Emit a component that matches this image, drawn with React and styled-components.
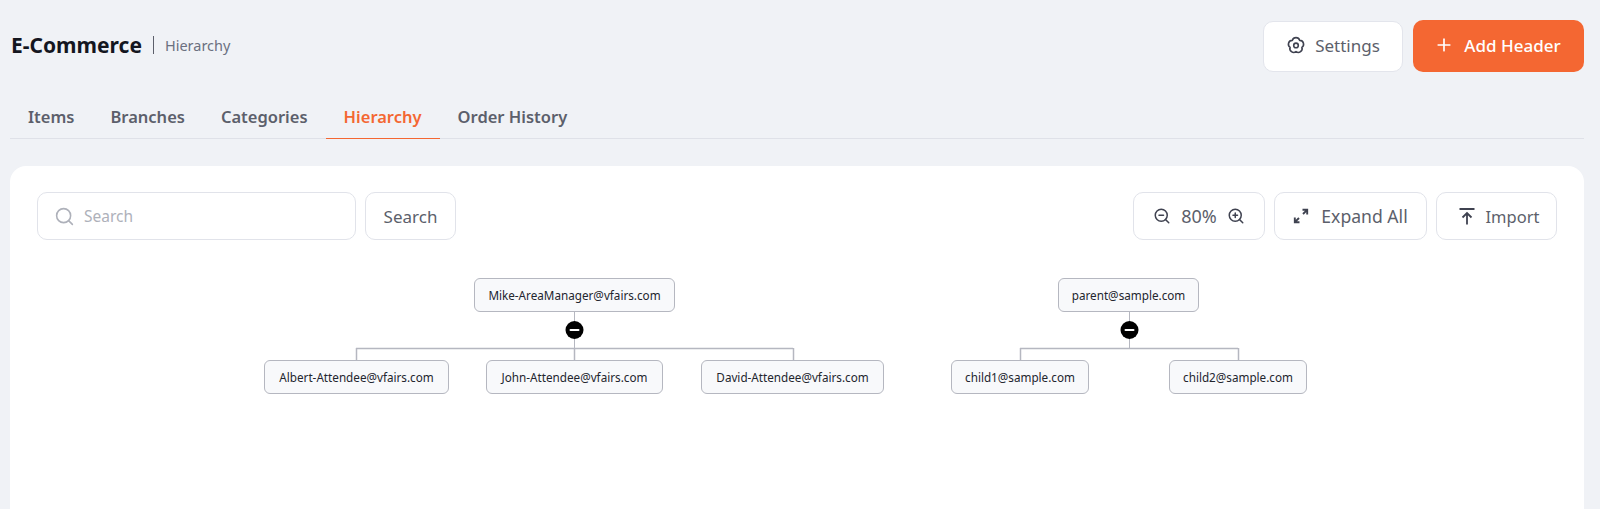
import React from 'react'
import styled, { createGlobalStyle } from 'styled-components'
import { Search, ZoomIn, ZoomOut, Plus } from 'lucide-react'

const GlobalStyle = createGlobalStyle`
    html, body {
        margin: 0;
        height: 509px;
        overflow: hidden;
        background: #f0f2f6;
        font-family: "Noto Sans", "Open Sans", sans-serif;
    }
    * { box-sizing: border-box; }
`

const Page = styled.div`
    height: 509px;
    padding: 20px 16px 0 10px;
    display: flex;
    flex-direction: column;
`

const Header = styled.header`
    height: 52px;
    display: flex;
    align-items: center;
    justify-content: space-between;
`

const TitleGroup = styled.div`
    display: flex;
    align-items: center;
    padding: 0 0 2px 1px;
`

const Title = styled.h1`
    margin: 0;
    font-size: 21px;
    line-height: 24px;
    font-weight: 700;
    color: #14161f;
`

const SubTitle = styled.span`
    margin-left: 11px;
    padding-left: 11px;
    border-left: 1px solid #5c5f6b;
    font-size: 14.5px;
    line-height: 18px;
    color: #6b7080;
`

const HeaderActions = styled.div`
    display: flex;
    align-items: center;
    gap: 10px;
`

const SettingsButton = styled.button`
    width: 140px;
    height: 51px;
    display: flex;
    align-items: center;
    justify-content: center;
    gap: 9px;
    padding: 0 0 2px;
    background: #fff;
    border: 1px solid #e3e5ec;
    border-radius: 10px;
    font: inherit;
    font-size: 17px;
    color: #5c5f6b;
`

const PrimaryButton = styled.button`
    width: 171px;
    height: 52px;
    display: flex;
    align-items: center;
    justify-content: center;
    gap: 10px;
    padding: 0 2px 2px 0;
    background: #f46732;
    border: 0;
    border-radius: 10px;
    font: inherit;
    font-size: 17px;
    font-weight: 500;
    color: #fff;
`

const Tabs = styled.nav`
    margin-top: 27px;
    height: 40px;
    display: flex;
    border-bottom: 1px solid #dfe1e8;
`

const Tab = styled.a`
    height: 40px;
    padding: 0 18px 5px;
    display: flex;
    align-items: center;
    font-size: 16.5px;
    font-weight: 600;
    color: ${p => (p.$active ? '#f46732' : '#5c5f6b')};
    border-bottom: 1px solid ${p => (p.$active ? '#f46732' : 'transparent')};
`

const Card = styled.main`
    margin-top: 27px;
    flex: 1;
    background: #fff;
    border-radius: 16px 16px 0 0;
    padding: 26px 27px 0;
    position: relative;
`

const Toolbar = styled.div`
    display: flex;
    justify-content: space-between;
`

const ToolGroup = styled.div`
    display: flex;
    gap: 9px;
`

const SearchBox = styled.label`
    width: 319px;
    height: 48px;
    display: flex;
    align-items: center;
    gap: 7px;
    padding: 0 16px;
    border: 1px solid #e1e3ea;
    border-radius: 10px;
`

const SearchInput = styled.input`
    flex: 1;
    min-width: 0;
    border: 0;
    outline: none;
    font: inherit;
    font-size: 15.5px;
    color: #5c5f6b;
    &::placeholder { color: #aeb1ba; }
`

const ToolButton = styled.button`
    width: ${p => p.$width}px;
    height: 48px;
    display: flex;
    align-items: center;
    justify-content: center;
    gap: ${p => p.$gap || 12}px;
    background: #fff;
    border: 1px solid #e1e3ea;
    border-radius: 10px;
    font: inherit;
    font-size: ${p => p.$size || 17}px;
    color: #5c5f6b;
    padding: 0 0 0 ${p => p.$shift || 0}px;
`

const Canvas = styled.div`
    position: absolute;
    inset: 0;
    pointer-events: none;
`

const Links = styled.svg`
    position: absolute;
    left: 0;
    top: 0;
`

const Node = styled.div`
    position: absolute;
    left: ${p => p.$x}px;
    top: ${p => p.$y}px;
    width: ${p => p.$w}px;
    height: 34px;
    display: flex;
    align-items: center;
    justify-content: center;
    background: #f8f9fb;
    border: 1px solid #b5b7c0;
    border-radius: 6px;
    font-size: 11.7px;
    color: #23252e;
    white-space: nowrap;
`

// page offsets of the card, the diagram coordinates below are page coordinates
const OX = 10
const OY = 166

const trees = [
    {
        cx: 574,
        root: { label: 'Mike-AreaManager@vfairs.com', x: 474, w: 201 },
        children: [
            { label: 'Albert-Attendee@vfairs.com', x: 264, w: 185, stub: 356 },
            { label: 'John-Attendee@vfairs.com', x: 486, w: 177, stub: 574 },
            { label: 'David-Attendee@vfairs.com', x: 701, w: 183, stub: 793 },
        ],
    },
    {
        cx: 1129,
        root: { label: 'parent@sample.com', x: 1058, w: 141 },
        children: [
            { label: 'child1@sample.com', x: 951, w: 138, stub: 1020 },
            { label: 'child2@sample.com', x: 1169, w: 138, stub: 1238 },
        ],
    },
]

// five rounded lobes around the centre, valleys on a 6.2 radius
const gearPath = () => {
    const points = [0, 1, 2, 3, 4].map(i => {
        const a = ((-54 + i * 72) * Math.PI) / 180
        return `${(10 + 6.2 * Math.cos(a)).toFixed(2)} ${(10.4 + 6.2 * Math.sin(a)).toFixed(2)}`
    })
    return `M${points[4]}` + points.map(p => `A3.8 3.8 0 0 1 ${p}`).join('') + 'Z'
}

const GearIcon = () => (
    <svg width="20" height="20" viewBox="0 0 20 20" fill="none" stroke="#3f4250" strokeWidth="1.6" strokeLinejoin="round">
        <path d={gearPath()} />
        <circle cx="10" cy="10.4" r="2.3" />
    </svg>
)

const ExpandIcon = () => (
    <svg width="16" height="16" viewBox="0 0 16 16" fill="none" stroke="#3f4250" strokeWidth="1.9">
        <path d="M10 6 14.2 1.8M9.5 1.8h4.7v4.7M6 10 1.8 14.2M6.5 14.2H1.8V9.5" />
    </svg>
)

const ImportIcon = () => (
    <svg width="16" height="18" viewBox="0 0 16 18" fill="none" stroke="#3f4250" strokeWidth="1.8">
        <path d="M.5 2h15M8 17.5V6.5M3.5 10.5 8 6l4.5 4.5" />
    </svg>
)

const CollapseIcon = ({ cx }) => (
    <g>
        <circle cx={cx + 0.5} cy="330" r="9" fill="#000" stroke="none" />
        <rect x={cx - 4.5} y="329" width="10" height="2" rx="1" fill="#fff" stroke="none" />
    </g>
)

const App = () => (
    <Page>
        <GlobalStyle />
        <Header>
            <TitleGroup>
                <Title>E-Commerce</Title>
                <SubTitle>Hierarchy</SubTitle>
            </TitleGroup>
            <HeaderActions>
                <SettingsButton><GearIcon />Settings</SettingsButton>
                <PrimaryButton><Plus size={20} strokeWidth={2} />Add Header</PrimaryButton>
            </HeaderActions>
        </Header>
        <Tabs>
            {['Items', 'Branches', 'Categories', 'Hierarchy', 'Order History'].map(t => (
                <Tab key={t} $active={t === 'Hierarchy'}>{t}</Tab>
            ))}
        </Tabs>
        <Card>
            <Toolbar>
                <ToolGroup>
                    <SearchBox>
                        <Search size={21} color="#aeb1ba" strokeWidth={1.8} />
                        <SearchInput placeholder="Search" />
                    </SearchBox>
                    <ToolButton $width={91}>Search</ToolButton>
                </ToolGroup>
                <ToolGroup>
                    <ToolButton $width={132} $gap={10} $size={18}>
                        <ZoomOut size={18} color="#3f4250" strokeWidth={2} />
                        80%
                        <ZoomIn size={18} color="#3f4250" strokeWidth={2} />
                    </ToolButton>
                    <ToolButton $width={153} $size={17.6}><ExpandIcon />Expand All</ToolButton>
                    <ToolButton $width={121} $size={16.5} $gap={11} $shift={5}><ImportIcon />Import</ToolButton>
                </ToolGroup>
            </Toolbar>
            <Canvas>
                <Links width="1574" height="343" viewBox={`${OX} ${OY} 1574 343`}>
                    {trees.map(tree => (
                        <g key={tree.cx} fill="none" stroke="#b5b7c0">
                            <path d={`M${tree.cx + 0.5} 311V349`} />
                            <path strokeWidth="1.5" d={`M${tree.children[0].stub} 348.5H${tree.children[tree.children.length - 1].stub}`} />
                            {tree.children.map(c => (
                                <path key={c.label} strokeWidth="1.5" d={`M${c.stub + 0.5} 348V361`} />
                            ))}
                            <CollapseIcon cx={tree.cx} />
                        </g>
                    ))}
                </Links>
                {trees.map(tree => (
                    <React.Fragment key={tree.cx}>
                        <Node $x={tree.root.x - OX} $y={278 - OY} $w={tree.root.w}>{tree.root.label}</Node>
                        {tree.children.map(c => (
                            <Node key={c.label} $x={c.x - OX} $y={360 - OY} $w={c.w}>{c.label}</Node>
                        ))}
                    </React.Fragment>
                ))}
            </Canvas>
        </Card>
    </Page>
)

export default App
